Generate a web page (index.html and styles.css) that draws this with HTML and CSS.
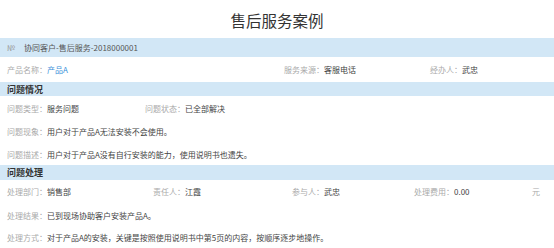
FILE: index.html
```html
<!DOCTYPE html>
<html lang="zh-CN">
<head>
<meta charset="utf-8">
<title>售后服务案例</title>
<link rel="stylesheet" href="styles.css">
</head>
<body>
<div class="page">
  <h1 class="title">售后服务案例</h1>
  <div class="bar bar-no"><span class="no-mark">№</span><span class="no-text">协同客户-售后服务-2018000001</span></div>
  <div class="row r-prod">
    <div class="cell w277"><span class="lbl">产品名称：</span><span class="val link">产品A</span></div>
    <div class="cell w146"><span class="lbl">服务来源：</span><span class="val">客服电话</span></div>
    <div class="cell"><span class="lbl">经办人：</span><span class="val">武忠</span></div>
  </div>
  <div class="bar bar-sec">问题情况</div>
  <div class="row h24">
    <div class="cell w138"><span class="lbl">问题类型：</span><span class="val">服务问题</span></div>
    <div class="cell"><span class="lbl">问题状态：</span><span class="val">已全部解决</span></div>
  </div>
  <div class="row h23">
    <div class="cell"><span class="lbl">问题现象：</span><span class="val">用户对于产品A无法安装不会使用。</span></div>
  </div>
  <div class="row h22">
    <div class="cell"><span class="lbl">问题描述：</span><span class="val">用户对于产品A没有自行安装的能力，使用说明书也遗失。</span></div>
  </div>
  <div class="bar bar-sec2">问题处理</div>
  <div class="row h23">
    <div class="cell w146"><span class="lbl">处理部门：</span><span class="val">销售部</span></div>
    <div class="cell w139"><span class="lbl">责任人：</span><span class="val">江霞</span></div>
    <div class="cell w122"><span class="lbl">参与人：</span><span class="val">武忠</span></div>
    <div class="cell w118"><span class="lbl">处理费用：</span><span class="val">0.00</span></div>
    <div class="cell"><span class="lbl">元</span></div>
  </div>
  <div class="row h24">
    <div class="cell"><span class="lbl">处理结果：</span><span class="val">已到现场协助客户安装产品A。</span></div>
  </div>
  <div class="row h21">
    <div class="cell"><span class="lbl">处理方式：</span><span class="val">对于产品A的安装，关键是按照使用说明书中第5页的内容，按顺序逐步地操作。</span></div>
  </div>
</div>
</body>
</html>
```
FILE: styles.css
```css
* { box-sizing: border-box; margin: 0; padding: 0; }
html, body { background: #ffffff; }
body {
  font-family: "Noto Sans CJK SC", "Noto Sans", sans-serif;
  color: #444;
  width: 554px;
  height: 248px;
  overflow: hidden;
}
.page { display: flex; flex-direction: column; }
.title {
  height: 38px;
  display: flex;
  align-items: center;
  justify-content: center;
  font-size: 15.5px;
  font-weight: normal;
  color: #333;
  padding-top: 2px;
}
.bar {
  background: #d2e7f6;
  display: flex;
  align-items: center;
  padding-left: 7px;
}
.bar-no { height: 19px; font-size: 8px; color: #555; }
.no-mark { color: #999; margin-right: 9px; }
.bar-sec, .bar-sec2 {
  font-size: 9px;
  font-weight: bold;
  color: #333;
}
.bar-sec { height: 14px; }
.bar-sec2 { height: 15px; }
.row {
  display: flex;
  align-items: center;
  padding-left: 7px;
  font-size: 8px;
}
.r-prod { height: 25px; }
.h21 { height: 21px; }
.h22 { height: 22px; }
.h23 { height: 23px; }
.h24 { height: 24px; }
.cell { display: flex; align-items: center; white-space: nowrap; }
.w277 { width: 277px; }
.w146 { width: 146px; }
.w139 { width: 139px; }
.w138 { width: 138px; }
.w122 { width: 122px; }
.w118 { width: 118px; }
.lbl { color: #aaa; }
.val { color: #444; }
.link { color: #3a8fd9; }
```
